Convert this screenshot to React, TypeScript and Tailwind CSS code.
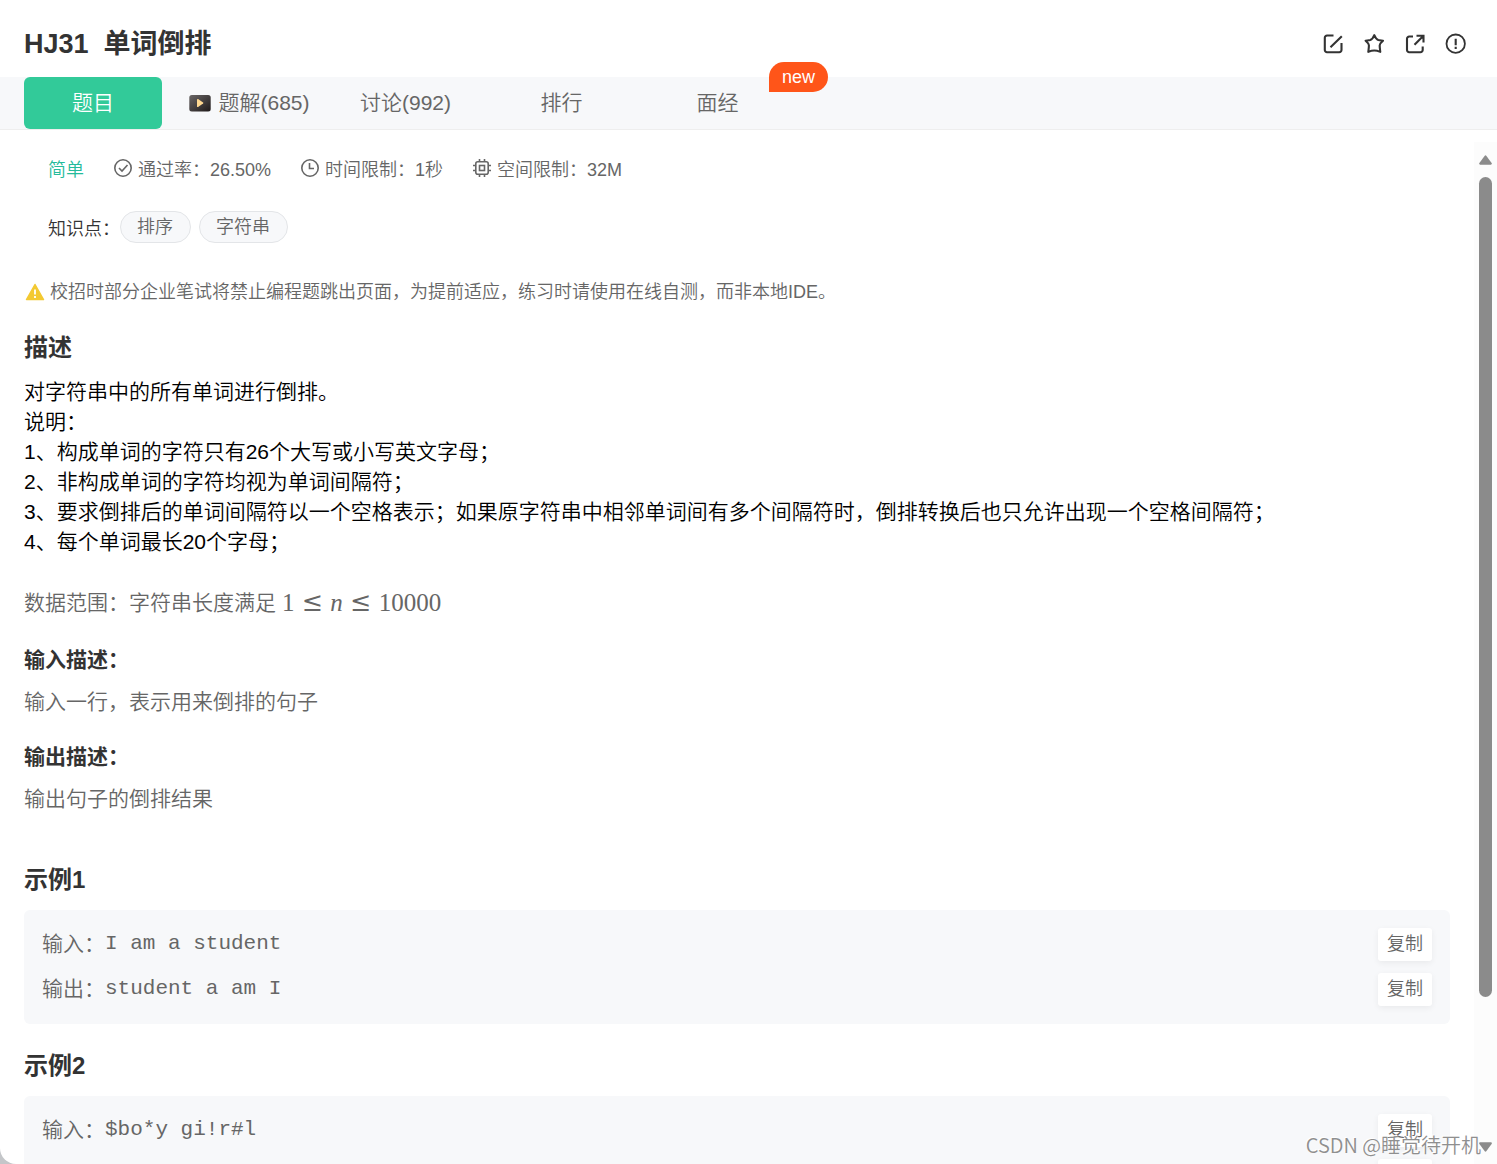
import type { ReactNode } from "react";

const tabs = [
  { label: "题目", active: true },
  { label: "题解(685)", video: true },
  { label: "讨论(992)" },
  { label: "排行" },
  { label: "面经", badge: "new" },
];

const statement = [
  "对字符串中的所有单词进行倒排。",
  "说明：",
  "1、构成单词的字符只有26个大写或小写英文字母；",
  "2、非构成单词的字符均视为单词间隔符；",
  "3、要求倒排后的单词间隔符以一个空格表示；如果原字符串中相邻单词间有多个间隔符时，倒排转换后也只允许出现一个空格间隔符；",
  "4、每个单词最长20个字母；",
];

const examples = [
  { title: "示例1", input: "I am a student", output: "student a am I" },
  { title: "示例2", input: "$bo*y gi!r#l", output: "l r gi y bo" },
];

function VideoIcon() {
  return (
    <svg width="22" height="18" viewBox="0 0 22 18" aria-hidden="true">
      <defs>
        <linearGradient id="video" x1="0" y1="0" x2="1" y2="1">
          <stop offset="0" stopColor="#6a6666" />
          <stop offset="1" stopColor="#1f1a1a" />
        </linearGradient>
      </defs>
      <rect x="0.3" y="1" width="21.4" height="16.4" rx="2.5" fill="url(#video)" />
      <path d="M8 5.6c0-.6.6-.9 1.1-.6l5 3.4c.4.3.4.9 0 1.2l-5 3.4c-.5.3-1.1 0-1.1-.6z" fill="#ffd891" />
    </svg>
  );
}

function HeaderIcon({ label, children }: { label: string; children: ReactNode }) {
  return (
    <button type="button" aria-label={label} className="text-[#333]">
      <svg width="22" height="22" viewBox="0 0 22 22" fill="none" stroke="currentColor" strokeWidth="2.1" aria-hidden="true">
        {children}
      </svg>
    </button>
  );
}

function MetaItem({ icon, children }: { icon: ReactNode; children: ReactNode }) {
  return (
    <li className="flex items-center gap-[5px]">
      <svg width="20" height="20" viewBox="0 0 20 20" fill="none" stroke="currentColor" strokeWidth="1.6" className="mb-1" aria-hidden="true">
        {icon}
      </svg>
      <span>{children}</span>
    </li>
  );
}

function ExampleRow({ label, value }: { label: string; value: string }) {
  return (
    <div className="flex h-[33px] items-center">
      <span className="pb-0.5">{label}</span>
      <code className="flex-1 pb-0.5 font-['Liberation_Mono',monospace]">{value}</code>
      <button type="button" className="h-full rounded-[3px] bg-white px-[9px] pb-0.5 text-[18px] font-[350] shadow-[0_2px_6px_rgba(0,0,0,0.06)]">
        复制
      </button>
    </div>
  );
}

function Scrollbar() {
  return (
    <div className="mt-3 flex w-[23px] shrink-0 flex-col items-center bg-[#fcfcfc] pt-[13px] pb-3" aria-hidden="true">
      <svg width="13" height="10" viewBox="0 0 14 10" fill="#8b8b8b">
        <path d="M6 .6a1.3 1.3 0 0 1 2 0l5.6 7.5c.6.9 0 1.9-.9 1.9H1.3C.4 10-.2 9 .4 8.1z" />
      </svg>
      <div className="mt-3 flex w-[13px] flex-1 flex-col">
        <div className="h-[85%] rounded-full bg-[#8b8b8b]" />
      </div>
      <svg width="13" height="10" viewBox="0 0 14 10" fill="#8b8b8b">
        <path d="M6 9.4a1.3 1.3 0 0 0 2 0l5.6-7.5c.6-.9 0-1.9-.9-1.9H1.3C.4 0-.2 1 .4 1.9z" />
      </svg>
    </div>
  );
}

export default function App() {
  return (
    <div className="h-screen bg-[#c4c6c9] font-['Liberation_Sans','Noto_Sans_CJK_SC',sans-serif] text-[21px] leading-[30px] font-[350] text-[#666]">
      <main className="relative flex h-full flex-col overflow-hidden rounded-bl-2xl bg-white">
        <header className="flex h-[77px] shrink-0 items-center justify-between pt-[10px] pr-[30px] pl-6">
          <h1 className="flex gap-[15px] text-[27px] font-bold text-[#333]">
            <span>HJ31</span>
            <span>单词倒排</span>
          </h1>
          <div className="flex items-center gap-[19px]">
            <HeaderIcon label="笔记">
              <path d="M11.5 2.5H5a2.2 2.2 0 0 0-2.200 2.200v12.300A2.200 2.200 0 0 0 5 19.200h12.300a2.200 2.200 0 0 0 2.200-2.200V10M8.500 14.200 19.800 3.200" />
            </HeaderIcon>
            <HeaderIcon label="收藏">
              <path strokeLinejoin="round" d="M11.300 2.200c1.200 3 2.600 4.400 4 4.900 1.500.4 3 .4 4.700.6-2 1.700-3.200 3.200-3.300 4.600-.1 1.700.3 3.900.6 6.600-2.400-1-4.400-1.400-6-1.400s-3.600.4-6 1.400c.3-2.700.7-4.900.6-6.600-.1-1.400-1.300-2.900-3.300-4.600 1.700-.2 3.200-.2 4.700-.6 1.400-.5 2.800-1.900 4-4.900z" />
            </HeaderIcon>
            <HeaderIcon label="新窗口打开">
              <path d="M9 3.500H5.200A2.200 2.200 0 0 0 3 5.700v11.300a2.200 2.200 0 0 0 2.200 2.200h11.300a2.200 2.200 0 0 0 2.200-2.200v-3.500M12.500 2.700h7V9.500M19.200 3 10.500 11.700" />
            </HeaderIcon>
            <HeaderIcon label="反馈">
              <circle cx="10.700" cy="10.700" r="9.200" strokeWidth="1.8" />
              <path d="M10.700 5.700v6.500M10.700 13.800v2.200" />
            </HeaderIcon>
          </div>
        </header>

        <nav className="flex h-[53px] shrink-0 gap-[18px] border-b border-[#eee] bg-[#f7f8fa] pl-6">
          {tabs.map((tab) => (
            <a
              key={tab.label}
              href="#"
              className={
                tab.active
                  ? "flex w-[138px] items-center justify-center rounded-md bg-[#32ca99] text-white"
                  : "relative flex w-[138px] items-center justify-center gap-[7px] pl-px"
              }
            >
              {tab.video && <VideoIcon />}
              {tab.label}
              {tab.badge && (
                <span className="absolute -top-[15px] left-[121px] flex h-[30px] w-[59px] items-center justify-center rounded-full rounded-bl-none bg-[#ff5519] text-[18px] text-white">
                  {tab.badge}
                </span>
              )}
            </a>
          ))}
        </nav>

        <div className="flex min-h-0 flex-1">
          <div className="min-w-0 flex-1 overflow-hidden pr-6 pl-6">
            <ul className="mt-[27px] flex gap-[29px] pl-6 text-[18px] leading-[26px]">
              <li className="text-[#25bb9b]">简单</li>
              <MetaItem
                icon={
                  <>
                    <circle cx="10" cy="10" r="8.2" />
                    <path d="m6 10 3 3 5.500-6" />
                  </>
                }
              >
                通过率：26.50%
              </MetaItem>
              <MetaItem
                icon={
                  <>
                    <circle cx="10" cy="10" r="8.2" />
                    <path d="M9.500 5v5.500H14" />
                  </>
                }
              >
                时间限制：1秒
              </MetaItem>
              <MetaItem
                icon={
                  <>
                    <rect x="3.8" y="3.8" width="12.4" height="12.4" rx="2" />
                    <rect x="7.5" y="7.5" width="5" height="5" />
                    <path d="M7.500 1v3m5-3v3m-5 12v3m5-3v3M1 7.500h3m-3 5h3m12-5h3m-3 5h3" />
                  </>
                }
              >
                空间限制：32M
              </MetaItem>
            </ul>

            <div className="mt-7 flex items-center gap-2 pl-6 text-[18px] leading-[26px]">
              <span className="-mr-2 pt-1 text-[#333]">知识点：</span>
              {["排序", "字符串"].map((tag) => (
                <a key={tag} href="#" className="flex h-8 items-center rounded-full border border-[#e3e5e8] bg-[#f7f8fa] pr-[17px] pl-4">
                  {tag}
                </a>
              ))}
            </div>

            <p className="mt-9 flex items-center gap-1 text-[18px] leading-[26px]">
              <svg width="22" height="18" viewBox="0 0 22 18" aria-hidden="true">
                <path d="M11 1.500 19.500 16.500h-17z" fill="#f3c932" stroke="#f3c932" strokeWidth="1.5" strokeLinejoin="round" />
                <path d="M11 6.500v5M11 13v2" stroke="#fff" strokeWidth="1.8" />
              </svg>
              校招时部分企业笔试将禁止编程题跳出页面，为提前适应，练习时请使用在线自测，而非本地IDE。
            </p>

            <h2 className="mt-[25px] text-[24px] leading-9 font-bold text-[#333]">描述</h2>
            <div className="mt-[11px] text-black">
              {statement.map((line) => (
                <p key={line}>{line}</p>
              ))}
            </div>

            <p className="mt-[31px] flex items-center gap-[6px]">
              数据范围：字符串长度满足
              <span className="flex items-center gap-2 font-['Liberation_Serif',serif] text-[25px]">
                <span>1</span>
                <span className="font-['DejaVu_Math_TeX_Gyre','DejaVu_Serif',serif]">≤</span>
                <i>n</i>
                <span className="font-['DejaVu_Math_TeX_Gyre','DejaVu_Serif',serif]">≤</span>
                <span>10000</span>
              </span>
            </p>

            <h3 className="mt-[27px] font-bold text-[#333]">输入描述：</h3>
            <p className="mt-3">输入一行，表示用来倒排的句子</p>
            <h3 className="mt-[25px] font-bold text-[#333]">输出描述：</h3>
            <p className="mt-3">输出句子的倒排结果</p>

            <div className="mt-12 flex flex-col gap-6">
              {examples.map((example) => (
                <section key={example.title}>
                  <h2 className="text-[24px] leading-9 font-bold text-[#333]">{example.title}</h2>
                  <div className="mt-3 flex flex-col gap-3 rounded-md bg-[#f7f8fa] p-[18px]">
                    <ExampleRow label="输入：" value={example.input} />
                    <ExampleRow label="输出：" value={example.output} />
                  </div>
                </section>
              ))}
            </div>
          </div>
          <Scrollbar />
        </div>

        <span className="absolute right-4 bottom-1 font-['Noto_Sans_CJK_SC',sans-serif] text-[20px] text-[#8f8f8f] [text-shadow:-1px_-1px_0_#fff]">
          CSDN @睡觉待开机
        </span>
      </main>
    </div>
  );
}
